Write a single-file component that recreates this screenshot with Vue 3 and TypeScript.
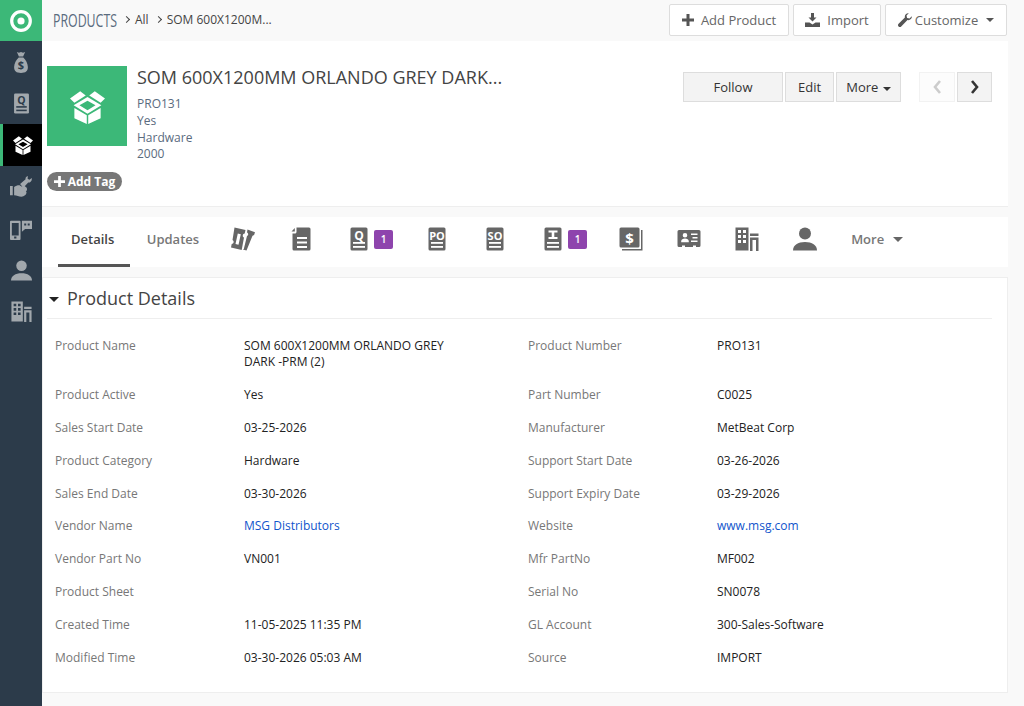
<template>
  <div class="page">
    <svg class="defs" width="0" height="0">
      <symbol id="i-box" viewBox="0 0 24 24">
        <path d="M0 6.500 7 1.500l3.800 3L3 9.500zM24 6.500l-7-5-3.800 3L21 9.500zM3 13l8.500 5V24L3 20zM21 13l-8.500 5V24l8.500-4z" />
        <path fill-rule="evenodd" d="M12 5.500l9.500 5.700L12 17 2.500 11.200zM12 8l-5.500 3.200 5.500 3.300 5.500-3.300z" />
      </symbol>
      <symbol id="i-bag" viewBox="0 0 24 24">
        <path d="M7.500 1l2.300 1L12 1l2.200 1 2.300-1-2.200 5H9.700zM9.500 7h5c2.700 2.500 5 6.500 5 10.500 0 4.500-2.500 6.500-7.500 6.500s-7.500-2-7.500-6.500C4.500 13.500 6.800 9.500 9.500 7z" />
      </symbol>
      <symbol id="i-ticket" viewBox="0 0 24 24">
        <path fill-rule="evenodd" d="M3.500.5l11 2.500-.8 3.500c-1 .1-1.700.8-1.900 1.800-.2 1 .3 1.900 1.200 2.300l-2.300 12.400-10.700-2.600.7-3.500c1-.1 1.700-.8 1.900-1.700.2-1-.2-1.900-1.100-2.300zM6.800 6.500l-2.300 10.500 3 .7L9.800 7.200z" />
        <path d="M16.500 2.500l7.500 2.700-1 3c-.9 0-1.500.5-1.800 1.300L15.500 23.500l-3.700-.9 1-.6 3.200-13c.7-.4 1.200-1 1.200-1.800 0-.8-.4-1.500-1.200-1.800z" />
      </symbol>
      <symbol id="i-doc" viewBox="0 0 24 24">
        <path fill-rule="evenodd" d="M7.500.5H20a1.500 1.500 0 0 1 1.500 1.500v20A1.500 1.500 0 0 1 20 23.500H5A1.500 1.500 0 0 1 3.500 22V6.500H6c.8 0 1.500-.7 1.500-1.500zM8 10v2h10v-2zm0 4.500v2h10v-2zm0 4.500v2h10v-2z" />
        <path d="M5.800 1v3.600H2.500z" />
      </symbol>
      <symbol id="i-sheet" viewBox="0 0 24 24">
        <rect x="3.500" y="0.500" width="17" height="23" rx="1.500" />
        <rect x="6" y="15" width="12" height="1.800" fill="var(--glyph)" />
        <rect x="6" y="19" width="12" height="1.800" fill="var(--glyph)" />
      </symbol>
      <symbol id="i-invoice" viewBox="0 0 24 24">
        <rect x="3.500" y="0.500" width="17" height="23" rx="1.500" />
        <path fill="var(--glyph)" d="M7.500 3.500h9v2h-3.200v4.500h3.200v2h-9v-2h3.200V5.500H7.500z" />
        <rect x="6" y="15" width="12" height="1.800" fill="var(--glyph)" />
        <rect x="6" y="19" width="12" height="1.800" fill="var(--glyph)" />
      </symbol>
      <symbol id="i-book" viewBox="0 0 24 24">
        <rect x="0.500" y="0.500" width="20" height="20" rx="1.500" />
        <path d="M22 3h1.500v20.500H3V22h19z" />
      </symbol>
      <symbol id="i-contact" viewBox="0 0 24 24">
        <path fill-rule="evenodd" d="M2 3h20a1.500 1.500 0 0 1 1.500 1.500v14A1.500 1.500 0 0 1 22 20h-3v-1.500h-3V20H8v-1.500H5V20H2a1.500 1.500 0 0 1-1.500-1.500v-14A1.500 1.500 0 0 1 2 3zM8 6a2.300 2.300 0 1 0 0 4.600A2.300 2.300 0 0 0 8 6zm0 5.600c-2 0-3.800 1-3.800 2.600v1h7.600v-1c0-1.600-1.800-2.600-3.800-2.600zM14 6.500V8h6.500V6.500zm1.500 3.500v1.500h5V10zM14 13.500V15h6.500v-1.500z" />
      </symbol>
      <symbol id="i-building" viewBox="0 0 24 24">
        <path fill-rule="evenodd" d="M.5.500h13v23H.5zM3 3v3h3V3zm5 0v3h3V3zM3 8v3h3V8zm5 0v3h3V8zM3 13v3h3v-3zm5 0v3h3v-3z" />
        <path d="M15 6.500h8.500V9H15zM15 10.500h8.500V24H21v-11h-3.500v11H15z" />
      </symbol>
      <symbol id="i-person" viewBox="0 0 24 24">
        <circle cx="12" cy="6.500" r="6" />
        <path d="M0 23.500c0-5.500 5-8.500 12-8.500s12 3 12 8.500z" />
      </symbol>
      <symbol id="i-hand" viewBox="0 0 24 24">
        <path d="M0 11h3v10H0zM4.500 12c2-1.500 4-2.200 6-2l2 1.500 3-1 2.500 2c1 1.500.7 3.500-.7 4.500l.7.500c0 3-2.500 5-5.500 5-3 0-5-1.500-8-1.500z" />
        <path d="M11 8.800l6-5.300c-.4-1.800.7-3 2.500-3.500l-.3 3 2 1.200 2.500-2c.5 2.500-1 5-3.800 5l-5.400 5.500z" />
      </symbol>
      <symbol id="i-phone" viewBox="0 0 24 24">
        <path fill-rule="evenodd" d="M1 3h9.500a1 1 0 0 1 1 1v19a1 1 0 0 1-1 1H1a1 1 0 0 1-1-1V4a1 1 0 0 1 1-1zM2 5.500V19h7.500V5.500zM4.500 20.300v2h2.500v-2z" />
        <path fill-rule="evenodd" d="M13 3h11v9h-7.500L13 15zM15.500 6v2.200h2.200V6zm3.800 0v2.200h2.200V6z" />
      </symbol>
    </svg>

    <aside class="sidebar">
      <div class="logo">
        <svg width="22" height="22" viewBox="0 0 22 22">
          <circle cx="11" cy="11" r="9.300" fill="none" stroke="#fff" stroke-width="3.200" />
          <circle cx="11" cy="11" r="3.600" fill="#fff" />
        </svg>
      </div>
      <div
        v-for="item in sideItems"
        :key="item.icon + item.size"
        class="side-item"
        :class="{ active: item.active }"
      >
        <svg :width="item.size" :height="item.size" viewBox="0 0 24 24">
          <use :href="'#' + item.icon" width="24" height="24" />
          <text
            v-if="item.glyph"
            :x="item.glyph.x"
            :y="item.glyph.y"
            text-anchor="middle"
            class="glyph"
            :style="{ fontSize: item.glyph.size + 'px' }"
          >{{ item.glyph.text }}</text>
        </svg>
      </div>
    </aside>

    <main class="main">
      <header class="topbar">
        <div class="crumbs">
          <span class="crumb-module">PRODUCTS</span>
          <span class="crumb-sep"></span>
          <span>All</span>
          <span class="crumb-sep"></span>
          <span>SOM 600X1200M...</span>
        </div>
        <div class="top-actions">
          <button class="top-btn add">
            <svg width="12" height="12" viewBox="0 0 12 12"><path d="M4.500 0h3v4.500H12v3H7.500V12h-3V7.500H0v-3h4.500z" /></svg>
            Add Product
          </button>
          <button class="top-btn import">
            <svg width="15" height="14" viewBox="0 0 15 14"><path d="M6 0h3v4.500h2.500l-4 4-4-4H6zM0 9.500h4.500l3 2 3-2H15V14H0z" /></svg>
            Import
          </button>
          <button class="top-btn customize">
            <svg width="14" height="14" viewBox="0 0 14 14"><path d="M13.800 3.200c.4 2.200-1.500 4.500-4.300 3.900L3.200 13.400a1.800 1.800 0 0 1-2.600-2.600l6.300-6.300C6.300 1.700 8.600-.2 10.800.2L8.500 2.500l.6 2.400 2.400.6z" /></svg>
            Customize
            <span class="caret"></span>
          </button>
        </div>
      </header>

      <div class="content">
        <section class="summary">
          <div class="summary-left">
            <div class="summary-row">
              <div class="hero">
                <svg width="35" height="35" viewBox="0 0 24 24"><use href="#i-box" width="24" height="24" /></svg>
              </div>
              <div class="summary-text">
                <h1 class="title">SOM 600X1200MM ORLANDO GREY DARK...</h1>
                <div class="meta">
                  <div v-for="line in metaLines" :key="line">{{ line }}</div>
                </div>
              </div>
            </div>
            <button class="tag-btn">
              <svg width="11" height="11" viewBox="0 0 12 12"><path d="M4.500 0h3v4.500H12v3H7.500V12h-3V7.500H0v-3h4.500z" /></svg>
              Add Tag
            </button>
          </div>
          <div class="summary-actions">
            <button class="act-btn follow">Follow</button>
            <button class="act-btn edit">Edit</button>
            <button class="act-btn more">More <span class="caret dark"></span></button>
            <button class="act-btn nav prev">
              <svg width="9" height="14" viewBox="0 0 9 14"><path d="M7 1 2 7l5 6" fill="none" stroke="currentColor" stroke-width="2.600" /></svg>
            </button>
            <button class="act-btn nav next">
              <svg width="9" height="14" viewBox="0 0 9 14"><path d="M2 1l5 6-5 6" fill="none" stroke="currentColor" stroke-width="2.600" /></svg>
            </button>
          </div>
        </section>

        <nav class="tabs">
          <div class="tab text active">Details</div>
          <div class="tab text">Updates</div>
          <div v-for="tab in iconTabs" :key="tab.icon + (tab.glyph?.text ?? '')" class="tab icon">
            <svg width="24" height="24" viewBox="0 0 24 24">
              <use :href="'#' + tab.icon" width="24" height="24" />
              <text
                v-if="tab.glyph"
                :x="tab.glyph.x"
                :y="tab.glyph.y"
                text-anchor="middle"
                class="glyph"
                :style="{ fontSize: tab.glyph.size + 'px' }"
              >{{ tab.glyph.text }}</text>
            </svg>
            <span v-if="tab.count" class="badge">{{ tab.count }}</span>
          </div>
          <div class="tab text more-tab">More <span class="tab-caret"></span></div>
        </nav>

        <section class="details">
          <div class="details-head">
            <span class="head-caret"></span>
            <h2>Product Details</h2>
          </div>
          <div class="field-grid">
            <template v-for="field in fields" :key="field.label">
              <div class="field-label">{{ field.label }}</div>
              <div class="field-value" :class="{ link: field.link }">{{ field.value }}</div>
            </template>
          </div>
        </section>
      </div>
    </main>
  </div>
</template>

<script setup lang="ts">
interface Glyph {
  text: string;
  x: number;
  y: number;
  size: number;
}

interface SideItem {
  icon: string;
  size: number;
  active?: boolean;
  glyph?: Glyph;
}

interface IconTab {
  icon: string;
  count?: number;
  glyph?: Glyph;
}

interface Field {
  label: string;
  value: string;
  link?: boolean;
}

const quoteGlyph: Glyph = { text: 'Q', x: 12, y: 12.8, size: 12 };

const sideItems: SideItem[] = [
  { icon: 'i-bag', size: 22, glyph: { text: '$', x: 12, y: 20, size: 12 } },
  { icon: 'i-sheet', size: 21, glyph: quoteGlyph },
  { icon: 'i-box', size: 20, active: true },
  { icon: 'i-hand', size: 22 },
  { icon: 'i-phone', size: 22 },
  { icon: 'i-person', size: 21 },
  { icon: 'i-building', size: 21 }
];

const metaLines = ['PRO131', 'Yes', 'Hardware', '2000'];

const iconTabs: IconTab[] = [
  { icon: 'i-ticket' },
  { icon: 'i-doc' },
  { icon: 'i-sheet', count: 1, glyph: quoteGlyph },
  { icon: 'i-sheet', glyph: { text: 'PO', x: 12, y: 12.5, size: 11 } },
  { icon: 'i-sheet', glyph: { text: 'SO', x: 12, y: 12.5, size: 11 } },
  { icon: 'i-invoice', count: 1 },
  { icon: 'i-book', glyph: { text: '$', x: 10.5, y: 16.5, size: 15 } },
  { icon: 'i-contact' },
  { icon: 'i-building' },
  { icon: 'i-person' }
];

const fields: Field[] = [
  { label: 'Product Name', value: 'SOM 600X1200MM ORLANDO GREY DARK -PRM (2)' },
  { label: 'Product Number', value: 'PRO131' },
  { label: 'Product Active', value: 'Yes' },
  { label: 'Part Number', value: 'C0025' },
  { label: 'Sales Start Date', value: '03-25-2026' },
  { label: 'Manufacturer', value: 'MetBeat Corp' },
  { label: 'Product Category', value: 'Hardware' },
  { label: 'Support Start Date', value: '03-26-2026' },
  { label: 'Sales End Date', value: '03-30-2026' },
  { label: 'Support Expiry Date', value: '03-29-2026' },
  { label: 'Vendor Name', value: 'MSG Distributors', link: true },
  { label: 'Website', value: 'www.msg.com', link: true },
  { label: 'Vendor Part No', value: 'VN001' },
  { label: 'Mfr PartNo', value: 'MF002' },
  { label: 'Product Sheet', value: '' },
  { label: 'Serial No', value: 'SN0078' },
  { label: 'Created Time', value: '11-05-2025 11:35 PM' },
  { label: 'GL Account', value: '300-Sales-Software' },
  { label: 'Modified Time', value: '03-30-2026 05:03 AM' },
  { label: 'Source', value: 'IMPORT' }
];
</script>

<style>
html,
body {
  margin: 0;
  background: #f9f9f9;
}
</style>

<style scoped>
.defs {
  position: absolute;
}

.page {
  display: flex;
  height: 706px;
  overflow: hidden;
  font-family: "Open Sans", "Liberation Sans", sans-serif;
  font-size: 12px;
  color: #222;
  background: #f9f9f9;
}

.glyph {
  font-family: "Open Sans", "Liberation Sans", sans-serif;
  font-weight: 700;
  fill: var(--glyph);
}

.sidebar {
  flex: 0 0 42px;
  background: #2c3b4a;
}

.logo {
  display: flex;
  align-items: center;
  justify-content: center;
  height: 41px;
  background: #3cb878;
}

.side-item {
  --glyph: #2c3b4a;
  display: flex;
  align-items: center;
  justify-content: center;
  height: 41.7px;
  fill: #a2a8ad;
}

.side-item.active {
  box-sizing: border-box;
  background: #000;
  border-left: 3px solid #3cb878;
  fill: #fff;
}

.main {
  flex: 1;
  min-width: 0;
}

.topbar {
  display: flex;
  align-items: center;
  justify-content: space-between;
  box-sizing: border-box;
  height: 41px;
  padding: 0 17px 1px 11px;
}

.crumbs {
  display: flex;
  align-items: center;
  gap: 5px;
  padding-bottom: 1px;
  color: #444;
}

.crumb-module {
  width: 64px;
  font-size: 19px;
  color: #5a6b7e;
  transform: scaleX(0.65);
  transform-origin: left center;
  white-space: nowrap;
}

.crumb-sep {
  width: 5px;
  height: 5px;
  margin: 0 1px 0 2px;
  box-sizing: border-box;
  border-top: 1px solid #444;
  border-right: 1px solid #444;
  transform: rotate(45deg);
}

.top-actions {
  display: flex;
  gap: 4px;
}

.top-btn {
  display: flex;
  align-items: center;
  justify-content: center;
  gap: 7px;
  height: 32px;
  padding: 0;
  border: 1px solid #ddd;
  border-radius: 2px;
  background: #fff;
  font: inherit;
  font-size: 13px;
  color: #666;
  fill: #555;
}

.top-btn.add {
  width: 120px;
}

.top-btn.import {
  width: 88px;
}

.top-btn.customize {
  width: 122px;
  gap: 3px;
}

.caret {
  display: inline-block;
  margin-left: 5px;
  border-top: 4px solid #555;
  border-left: 4px solid transparent;
  border-right: 4px solid transparent;
}

.caret.dark {
  margin-left: 1px;
  border-top-color: #333;
  vertical-align: middle;
}

.content {
  width: 966px;
}

.summary {
  display: flex;
  justify-content: space-between;
  box-sizing: border-box;
  height: 166px;
  padding: 25px 16px 0 5px;
  background: #fff;
  border-bottom: 1px solid #eee;
}

.summary-row {
  display: flex;
  gap: 10px;
}

.hero {
  display: flex;
  align-items: center;
  justify-content: center;
  width: 80px;
  height: 80px;
  background: #3cb878;
  fill: #fff;
}

.title {
  margin: 0;
  font-size: 18px;
  font-weight: 400;
  line-height: 22px;
  color: #444;
  white-space: nowrap;
}

.meta {
  margin-top: 8px;
  line-height: 16.8px;
  color: #5a6b7e;
}

.tag-btn {
  display: flex;
  align-items: center;
  justify-content: center;
  gap: 3px;
  width: 75px;
  height: 19px;
  margin-top: 9px;
  padding: 0;
  border: none;
  border-radius: 10px;
  background: #777;
  font: inherit;
  font-size: 12px;
  font-weight: 700;
  color: #fff;
  fill: #fff;
}

.summary-actions {
  display: flex;
  align-items: flex-start;
  gap: 2px;
  padding-top: 6px;
}

.act-btn {
  height: 30px;
  padding: 0;
  border: 1px solid #ddd;
  background: #f3f3f3;
  font: inherit;
  font-size: 13px;
  color: #333;
}

.act-btn.follow {
  width: 100px;
}

.act-btn.edit {
  width: 49px;
}

.act-btn.more {
  width: 65px;
}

.act-btn.nav {
  display: flex;
  align-items: center;
  justify-content: center;
  width: 35px;
}

.act-btn.prev {
  width: 36px;
  margin-left: 16px;
  border-color: #f2f2f2;
  background: #fcfcfc;
  color: #ccc;
}

.tabs {
  --glyph: #fff;
  display: flex;
  box-sizing: border-box;
  height: 50px;
  margin-top: 10px;
  padding-left: 16px;
  background: #fff;
  fill: #666;
}

.tab {
  display: flex;
  align-items: center;
  box-sizing: border-box;
  height: 50px;
  padding-bottom: 6px;
}

.tab.text {
  padding-left: 13px;
  padding-right: 15px;
  margin-right: 4px;
  font-size: 13px;
  font-weight: 600;
  color: #777;
}

.tab.text:nth-child(2) {
  margin-right: 0;
}

.tab.text.active {
  padding-right: 15.500px;
  padding-bottom: 3px;
  border-bottom: 3px solid #555;
  color: #444;
}

.tab.icon {
  padding-left: 17px;
  padding-right: 17px;
  gap: 3px;
}

.tab.icon:has(.badge) {
  padding-right: 15px;
}

.badge {
  display: flex;
  align-items: center;
  justify-content: center;
  width: 19px;
  height: 19px;
  border-radius: 2px;
  background: #8e44ad;
  font-size: 10px;
  font-weight: 600;
  color: #fff;
}

.more-tab {
  gap: 9px;
  margin-left: 4px;
  padding-left: 0;
}

.tab-caret {
  border-top: 5px solid #666;
  border-left: 5px solid transparent;
  border-right: 5px solid transparent;
}

.details {
  box-sizing: border-box;
  height: 416px;
  margin-top: 10px;
  padding: 0 15px 0 4px;
  background: #fff;
  border: 1px solid #eee;
}

.details-head {
  display: flex;
  align-items: center;
  gap: 8px;
  height: 40px;
  border-bottom: 1px solid #eee;
}

.head-caret {
  margin-left: 2px;
  margin-top: 3px;
  border-top: 5px solid #222;
  border-left: 5px solid transparent;
  border-right: 5px solid transparent;
}

.details-head h2 {
  margin: 0;
  font-size: 18px;
  font-weight: 400;
  color: #444;
}

.field-grid {
  display: grid;
  grid-template-columns: 189px 284px 189px 1fr;
  grid-auto-rows: minmax(32.85px, auto);
  padding: 19.150px 0 0 8px;
}

.field-label {
  padding-bottom: 16.85px;
  line-height: 16px;
  color: #777;
}

.field-value {
  max-width: 222px;
  padding-bottom: 16.85px;
  line-height: 16px;
  color: #222;
}

.field-value.link {
  color: #15c;
}
</style>
